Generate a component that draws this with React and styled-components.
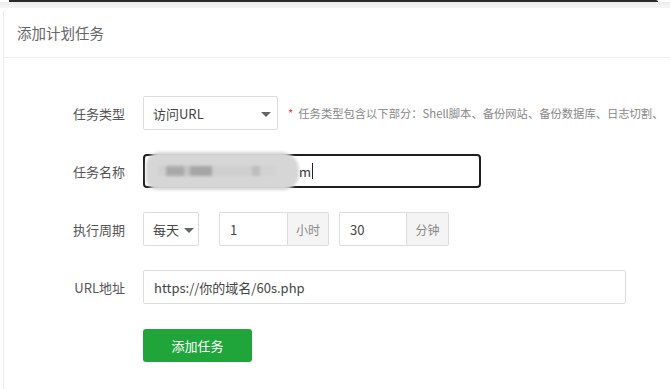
import React from "react";
import styled, { createGlobalStyle } from "styled-components";

const GlobalStyle = createGlobalStyle`
  html, body { margin: 0; padding: 0; background: #fff; }
  body { font-family: "Noto Sans CJK SC", "Noto Sans", "Liberation Sans", sans-serif; }
`;

const Page = styled.div`
  width: 670px;
  height: 389px;
  overflow: hidden;
  background: #fff;
  display: flex;
  flex-direction: column;
`;

const TopRule = styled.div`
  height: 2px;
  margin: 0 12px 0 9px;
  background: #2a2a2a;
  border-radius: 0 2px 0 0;
  flex: none;
`;

const Band = styled.div`
  height: 6px;
  background: linear-gradient(#ececec, #f6f6f6);
  flex: none;
`;

const Card = styled.div`
  flex: 1;
  margin-left: 3px;
  border-left: 1px solid #ececec;
  border-top-left-radius: 6px;
  background: #fff;
  display: flex;
  flex-direction: column;
`;

const Header = styled.div`
  height: 49px;
  flex: none;
  display: flex;
  align-items: center;
  padding-left: 13px;
  font-size: 14.5px;
  color: #666;
  border-bottom: 1px solid #efefef;
`;

const Form = styled.div`
  padding-top: 38px;
  display: flex;
  flex-direction: column;
  gap: 24px;
`;

const Row = styled.div`
  display: flex;
  align-items: center;
  height: 34px;
  white-space: nowrap;
`;

const Label = styled.div`
  width: 121px;
  margin-right: 18px;
  text-align: right;
  font-size: 13px;
  color: #555;
  flex: none;
`;

const Select = styled.div`
  box-sizing: border-box;
  width: ${(p) => p.$w}px;
  height: 34px;
  border: 1px solid #dcdcdc;
  border-radius: 2px;
  display: flex;
  align-items: center;
  justify-content: ${(p) => (p.$tight ? "flex-start" : "space-between")};
  gap: 5px;
  padding: 0 ${(p) => p.$pr}px 0 9px;
  font-size: 13px;
  color: #444;
  flex: none;
`;

const Caret = styled.span`
  width: 0;
  height: 0;
  border-left: 5px solid transparent;
  border-right: 5px solid transparent;
  border-top: 5px solid #666;
  margin-top: 2px;
`;

const Hint = styled.div`
  margin-left: 10px;
  font-size: 11.3px;
  color: #888;
  display: flex;
  gap: 5px;
  min-width: 0;
`;

const Star = styled.span`
  color: #e8413c;
`;

const Input = styled.div`
  box-sizing: border-box;
  width: ${(p) => p.$w}px;
  height: 34px;
  border: 1px solid #dcdcdc;
  border-radius: 2px;
  display: flex;
  align-items: center;
  padding-left: 10px;
  font-size: 13px;
  color: #444;
  flex: none;
  background: #fff;
`;

const FocusInput = styled(Input)`
  position: relative;
  border: 2px solid #1e1e1e;
  border-radius: 4px;
  padding-left: 8px;
  color: #333;
`;

const Redact = styled.div`
  position: absolute;
  left: 1px;
  top: -4px;
  width: 153px;
  height: 38px;
  border-radius: 14px 18px 16px 12px;
  background: #d6d6d6;
  filter: blur(1.5px);
  display: flex;
  align-items: center;
  padding-left: 12px;
  box-sizing: border-box;
`;

const Pixel = styled.span`
  width: ${(p) => p.$w}px;
  height: 10px;
  background: ${(p) => p.$c};
`;

const TypedTail = styled.span`
  margin-left: 146px;
  display: flex;
  align-items: center;
  position: relative;
`;

const Cursor = styled.span`
  width: 1px;
  height: 16px;
  background: #222;
  margin-left: 1px;
`;

const Group = styled.div`
  display: flex;
  flex: none;
  margin-left: ${(p) => p.$ml}px;
`;

const GroupInput = styled(Input)`
  border-radius: 2px 0 0 2px;
  border-right: none;
`;

const Addon = styled.div`
  box-sizing: border-box;
  width: ${(p) => p.$w}px;
  height: 34px;
  border: 1px solid #dcdcdc;
  border-radius: 0 2px 2px 0;
  background: #f4f4f4;
  color: #888;
  font-size: 12px;
  display: flex;
  align-items: center;
  justify-content: center;
`;

const Button = styled.button`
  width: 109px;
  height: 33px;
  border: none;
  border-radius: 3px;
  background: #20a53a;
  color: #fff;
  font-family: inherit;
  font-size: 13px;
  padding: 0;
  flex: none;
`;

const pixels = [
  ["#d0d0d0", 8],
  ["#a9a9a9", 18],
  ["#c4c4c4", 6],
  ["#a5a5a5", 22],
  ["#cfcfcf", 40],
  ["#bdbdbd", 8],
  ["#d2d2d2", 16],
];

export default function App() {
  return (
    <Page>
      <GlobalStyle />
      <TopRule />
      <Band />
      <Card>
        <Header>添加计划任务</Header>
        <Form>
          <Row>
            <Label>任务类型</Label>
            <Select $w={135} $pr={6}>
              访问URL
              <Caret />
            </Select>
            <Hint>
              <Star>*</Star>
              <span>任务类型包含以下部分：Shell脚本、备份网站、备份数据库、日志切割、</span>
            </Hint>
          </Row>
          <Row>
            <Label>任务名称</Label>
            <FocusInput $w={338}>
              <Redact>
                {pixels.map(([c, w], i) => (
                  <Pixel key={i} $c={c} $w={w} />
                ))}
              </Redact>
              <TypedTail>
                m
                <Cursor />
              </TypedTail>
            </FocusInput>
          </Row>
          <Row>
            <Label>执行周期</Label>
            <Select $w={56} $pr={6} $tight>
              每天
              <Caret />
            </Select>
            <Group $ml={20}>
              <GroupInput $w={68}>1</GroupInput>
              <Addon $w={42}>小时</Addon>
            </Group>
            <Group $ml={10}>
              <GroupInput $w={67}>30</GroupInput>
              <Addon $w={43}>分钟</Addon>
            </Group>
          </Row>
          <Row>
            <Label>URL地址</Label>
            <Input $w={483}>https://你的域名/60s.php</Input>
          </Row>
          <Row>
            <Label />
            <Button>添加任务</Button>
          </Row>
        </Form>
      </Card>
    </Page>
  );
}
